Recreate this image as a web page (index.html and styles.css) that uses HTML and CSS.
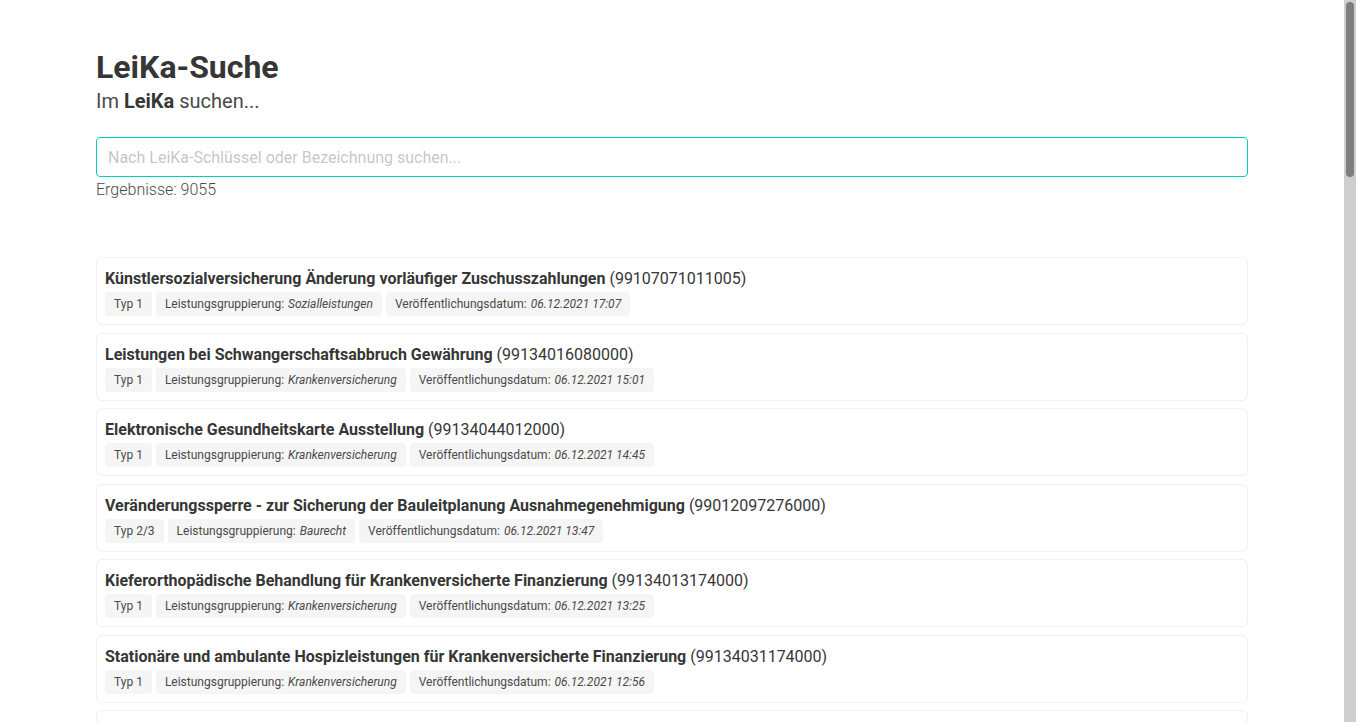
FILE: index.html
```html
<!DOCTYPE html>
<html lang="de">
<head>
<meta charset="utf-8">
<title>LeiKa-Suche</title>
<link rel="stylesheet" href="styles.css">
</head>
<body>
<section class="section">
  <div class="container">
    <h1 class="title">LeiKa-Suche</h1>
    <p class="subtitle">Im <strong>LeiKa</strong> suchen...</p>
    <input class="input" type="text" placeholder="Nach LeiKa-Schlüssel oder Bezeichnung suchen...">
    <p class="count">Ergebnisse: 9055</p>

    <div class="results">
      <div class="card"><div class="card-title"><strong>Künstlersozialversicherung Änderung vorläufiger Zuschusszahlungen</strong> (99107071011005)</div><div class="tags"><span class="tag">Typ 1</span><span class="tag">Leistungsgruppierung: <em>Sozialleistungen</em></span><span class="tag">Veröffentlichungsdatum: <em>06.12.2021 17:07</em></span></div></div>
      <div class="card"><div class="card-title"><strong>Leistungen bei Schwangerschaftsabbruch Gewährung</strong> (99134016080000)</div><div class="tags"><span class="tag">Typ 1</span><span class="tag">Leistungsgruppierung: <em>Krankenversicherung</em></span><span class="tag">Veröffentlichungsdatum: <em>06.12.2021 15:01</em></span></div></div>
      <div class="card"><div class="card-title"><strong>Elektronische Gesundheitskarte Ausstellung</strong> (99134044012000)</div><div class="tags"><span class="tag">Typ 1</span><span class="tag">Leistungsgruppierung: <em>Krankenversicherung</em></span><span class="tag">Veröffentlichungsdatum: <em>06.12.2021 14:45</em></span></div></div>
      <div class="card"><div class="card-title"><strong>Veränderungssperre - zur Sicherung der Bauleitplanung Ausnahmegenehmigung</strong> (99012097276000)</div><div class="tags"><span class="tag">Typ 2/3</span><span class="tag">Leistungsgruppierung: <em>Baurecht</em></span><span class="tag">Veröffentlichungsdatum: <em>06.12.2021 13:47</em></span></div></div>
      <div class="card"><div class="card-title"><strong>Kieferorthopädische Behandlung für Krankenversicherte Finanzierung</strong> (99134013174000)</div><div class="tags"><span class="tag">Typ 1</span><span class="tag">Leistungsgruppierung: <em>Krankenversicherung</em></span><span class="tag">Veröffentlichungsdatum: <em>06.12.2021 13:25</em></span></div></div>
      <div class="card"><div class="card-title"><strong>Stationäre und ambulante Hospizleistungen für Krankenversicherte Finanzierung</strong> (99134031174000)</div><div class="tags"><span class="tag">Typ 1</span><span class="tag">Leistungsgruppierung: <em>Krankenversicherung</em></span><span class="tag">Veröffentlichungsdatum: <em>06.12.2021 12:56</em></span></div></div>
      <div class="card"><div class="card-title"><strong>Häusliche Krankenpflege für Krankenversicherte Finanzierung</strong> (99134022174000)</div><div class="tags"><span class="tag">Typ 1</span><span class="tag">Leistungsgruppierung: <em>Krankenversicherung</em></span><span class="tag">Veröffentlichungsdatum: <em>06.12.2021 12:31</em></span></div></div>
      <div class="card"><div class="card-title"><strong>Haushaltshilfe für Krankenversicherte Gewährung</strong> (99134023080000)</div><div class="tags"><span class="tag">Typ 1</span><span class="tag">Leistungsgruppierung: <em>Krankenversicherung</em></span><span class="tag">Veröffentlichungsdatum: <em>06.12.2021 12:10</em></span></div></div>
      <div class="card"><div class="card-title"><strong>Krankengeld Gewährung</strong> (99134024080000)</div><div class="tags"><span class="tag">Typ 1</span><span class="tag">Leistungsgruppierung: <em>Krankenversicherung</em></span><span class="tag">Veröffentlichungsdatum: <em>06.12.2021 11:52</em></span></div></div>
      <div class="card"><div class="card-title"><strong>Mutterschaftsgeld für Krankenversicherte Gewährung</strong> (99134026080000)</div><div class="tags"><span class="tag">Typ 1</span><span class="tag">Leistungsgruppierung: <em>Krankenversicherung</em></span><span class="tag">Veröffentlichungsdatum: <em>06.12.2021 11:34</em></span></div></div>
      <div class="card"><div class="card-title"><strong>Baugenehmigung Erteilung</strong> (99012009261000)</div><div class="tags"><span class="tag">Typ 2/3</span><span class="tag">Leistungsgruppierung: <em>Baurecht</em></span><span class="tag">Veröffentlichungsdatum: <em>06.12.2021 11:12</em></span></div></div>
      <div class="card"><div class="card-title"><strong>Vorbescheid für Bauvorhaben Erteilung</strong> (99012098261000)</div><div class="tags"><span class="tag">Typ 2/3</span><span class="tag">Leistungsgruppierung: <em>Baurecht</em></span><span class="tag">Veröffentlichungsdatum: <em>06.12.2021 10:48</em></span></div></div>
      <div class="card"><div class="card-title"><strong>Abgeschlossenheitsbescheinigung Erteilung</strong> (99012001261000)</div><div class="tags"><span class="tag">Typ 2/3</span><span class="tag">Leistungsgruppierung: <em>Baurecht</em></span><span class="tag">Veröffentlichungsdatum: <em>06.12.2021 10:27</em></span></div></div>
      <div class="card"><div class="card-title"><strong>Hilfsmittel für Krankenversicherte Gewährung</strong> (99134025080000)</div><div class="tags"><span class="tag">Typ 1</span><span class="tag">Leistungsgruppierung: <em>Krankenversicherung</em></span><span class="tag">Veröffentlichungsdatum: <em>06.12.2021 10:05</em></span></div></div>
      <div class="card"><div class="card-title"><strong>Künstlersozialabgabe Festsetzung</strong> (99107069039000)</div><div class="tags"><span class="tag">Typ 1</span><span class="tag">Leistungsgruppierung: <em>Sozialleistungen</em></span><span class="tag">Veröffentlichungsdatum: <em>06.12.2021 09:44</em></span></div></div>
      <div class="card"><div class="card-title"><strong>Rehabilitationsleistungen für Krankenversicherte Gewährung</strong> (99134029080000)</div><div class="tags"><span class="tag">Typ 1</span><span class="tag">Leistungsgruppierung: <em>Krankenversicherung</em></span><span class="tag">Veröffentlichungsdatum: <em>06.12.2021 09:21</em></span></div></div>
      <div class="card"><div class="card-title"><strong>Fahrkosten für Krankenversicherte Erstattung</strong> (99134021064000)</div><div class="tags"><span class="tag">Typ 1</span><span class="tag">Leistungsgruppierung: <em>Krankenversicherung</em></span><span class="tag">Veröffentlichungsdatum: <em>06.12.2021 09:03</em></span></div></div>
      <div class="card"><div class="card-title"><strong>Zahnersatz für Krankenversicherte Finanzierung</strong> (99134036174000)</div><div class="tags"><span class="tag">Typ 1</span><span class="tag">Leistungsgruppierung: <em>Krankenversicherung</em></span><span class="tag">Veröffentlichungsdatum: <em>03.12.2021 16:42</em></span></div></div>
      <div class="card"><div class="card-title"><strong>Beseitigungsanordnung für bauliche Anlagen Erlass</strong> (99012005262000)</div><div class="tags"><span class="tag">Typ 2/3</span><span class="tag">Leistungsgruppierung: <em>Baurecht</em></span><span class="tag">Veröffentlichungsdatum: <em>03.12.2021 16:15</em></span></div></div>
      <div class="card"><div class="card-title"><strong>Nutzungsuntersagung für bauliche Anlagen Erlass</strong> (99012067262000)</div><div class="tags"><span class="tag">Typ 2/3</span><span class="tag">Leistungsgruppierung: <em>Baurecht</em></span><span class="tag">Veröffentlichungsdatum: <em>03.12.2021 15:58</em></span></div></div>
      <div class="card"><div class="card-title"><strong>Vorsorgeuntersuchungen für Krankenversicherte Finanzierung</strong> (99134034174000)</div><div class="tags"><span class="tag">Typ 1</span><span class="tag">Leistungsgruppierung: <em>Krankenversicherung</em></span><span class="tag">Veröffentlichungsdatum: <em>03.12.2021 15:36</em></span></div></div>
      <div class="card"><div class="card-title"><strong>Familienversicherung in der Krankenversicherung Durchführung</strong> (99134019007000)</div><div class="tags"><span class="tag">Typ 1</span><span class="tag">Leistungsgruppierung: <em>Krankenversicherung</em></span><span class="tag">Veröffentlichungsdatum: <em>03.12.2021 15:11</em></span></div></div>
      <div class="card"><div class="card-title"><strong>Künstlersozialversicherung Feststellung der Versicherungspflicht</strong> (99107071028000)</div><div class="tags"><span class="tag">Typ 1</span><span class="tag">Leistungsgruppierung: <em>Sozialleistungen</em></span><span class="tag">Veröffentlichungsdatum: <em>03.12.2021 14:49</em></span></div></div>
      <div class="card"><div class="card-title"><strong>Teilungsgenehmigung für Grundstücke Erteilung</strong> (99012089261000)</div><div class="tags"><span class="tag">Typ 2/3</span><span class="tag">Leistungsgruppierung: <em>Baurecht</em></span><span class="tag">Veröffentlichungsdatum: <em>03.12.2021 14:22</em></span></div></div>
      <div class="card"><div class="card-title"><strong>Heilmittel für Krankenversicherte Finanzierung</strong> (99134024174000)</div><div class="tags"><span class="tag">Typ 1</span><span class="tag">Leistungsgruppierung: <em>Krankenversicherung</em></span><span class="tag">Veröffentlichungsdatum: <em>03.12.2021 13:57</em></span></div></div>
      <div class="card"><div class="card-title"><strong>Zuzahlungsbefreiung in der Krankenversicherung Gewährung</strong> (99134038080000)</div><div class="tags"><span class="tag">Typ 1</span><span class="tag">Leistungsgruppierung: <em>Krankenversicherung</em></span><span class="tag">Veröffentlichungsdatum: <em>03.12.2021 13:30</em></span></div></div>
      <div class="card"><div class="card-title"><strong>Abbruch baulicher Anlagen Anzeige</strong> (99012002005000)</div><div class="tags"><span class="tag">Typ 2/3</span><span class="tag">Leistungsgruppierung: <em>Baurecht</em></span><span class="tag">Veröffentlichungsdatum: <em>03.12.2021 13:04</em></span></div></div>
      <div class="card"><div class="card-title"><strong>Künstlersozialversicherung Befreiung von der Versicherungspflicht</strong> (99107071003000)</div><div class="tags"><span class="tag">Typ 1</span><span class="tag">Leistungsgruppierung: <em>Sozialleistungen</em></span><span class="tag">Veröffentlichungsdatum: <em>03.12.2021 12:41</em></span></div></div>
      <div class="card"><div class="card-title"><strong>Künstliche Befruchtung für Krankenversicherte Finanzierung</strong> (99134014174000)</div><div class="tags"><span class="tag">Typ 1</span><span class="tag">Leistungsgruppierung: <em>Krankenversicherung</em></span><span class="tag">Veröffentlichungsdatum: <em>03.12.2021 12:18</em></span></div></div>
      <div class="card"><div class="card-title"><strong>Befreiung von Festsetzungen des Bebauungsplans Erteilung</strong> (99012004261000)</div><div class="tags"><span class="tag">Typ 2/3</span><span class="tag">Leistungsgruppierung: <em>Baurecht</em></span><span class="tag">Veröffentlichungsdatum: <em>03.12.2021 11:55</em></span></div></div>
      <div class="card"><div class="card-title"><strong>Krankenhausbehandlung für Krankenversicherte Finanzierung</strong> (99134018174000)</div><div class="tags"><span class="tag">Typ 1</span><span class="tag">Leistungsgruppierung: <em>Krankenversicherung</em></span><span class="tag">Veröffentlichungsdatum: <em>03.12.2021 11:32</em></span></div></div>
      <div class="card"><div class="card-title"><strong>Kinderkrankengeld Gewährung</strong> (99134015080000)</div><div class="tags"><span class="tag">Typ 1</span><span class="tag">Leistungsgruppierung: <em>Krankenversicherung</em></span><span class="tag">Veröffentlichungsdatum: <em>03.12.2021 11:08</em></span></div></div>
      <div class="card"><div class="card-title"><strong>Werbeanlagen Genehmigung</strong> (99012100261000)</div><div class="tags"><span class="tag">Typ 2/3</span><span class="tag">Leistungsgruppierung: <em>Baurecht</em></span><span class="tag">Veröffentlichungsdatum: <em>03.12.2021 10:46</em></span></div></div>
      <div class="card"><div class="card-title"><strong>Künstlersozialversicherung Meldung des voraussichtlichen Arbeitseinkommens</strong> (99107071057000)</div><div class="tags"><span class="tag">Typ 1</span><span class="tag">Leistungsgruppierung: <em>Sozialleistungen</em></span><span class="tag">Veröffentlichungsdatum: <em>03.12.2021 10:20</em></span></div></div>
    </div>
  </div>
</section>
<div class="scrollbar" aria-hidden="true"><div class="scrollbar-thumb"></div></div>
</body>
</html>
```

FILE: styles.css
```css
html, body {
  margin: 0;
  padding: 0;
  background: #ffffff;
}

body {
  font-family: Roboto, "Liberation Sans", Arial, sans-serif;
  color: #4a4a4a;
  font-size: 16px;
  line-height: 1.5;
}

/* visual replica of the browser's vertical scrollbar, overlaid at the right edge */
.scrollbar {
  position: fixed;
  top: 0;
  right: 0;
  bottom: 0;
  width: 12px;
  background: #cecece;
}

.scrollbar-thumb {
  position: absolute;
  top: 2px;
  left: 2px;
  width: 8px;
  height: 175px;
  border-radius: 4px;
  background: #7e7e7e;
}

.section {
  padding: 49px 0 96px 0;
}

.container {
  width: 1152px;
  margin-left: 96px;
}

.title {
  margin: 0;
  font-size: 32px;
  line-height: 36px;
  font-weight: 700;
  color: #363636;
}

.subtitle {
  margin: 4px 0 0 0;
  font-size: 20px;
  line-height: 25px;
  font-weight: 400;
  color: #4a4a4a;
}

.subtitle strong {
  font-weight: 700;
  color: #363636;
}

.input {
  display: block;
  box-sizing: border-box;
  width: 100%;
  height: 40px;
  margin: 23px 0 0 0;
  padding: 0 11px;
  font-family: inherit;
  font-size: 16px;
  color: #363636;
  background: #ffffff;
  border: 1px solid #00d1b2;
  border-radius: 4px;
  outline: none;
}

.input::placeholder {
  color: rgba(54, 54, 54, 0.3);
}

.count {
  margin: 1px 0 0 0;
  font-weight: 300;
  line-height: 24px;
  color: #4a4a4a;
}

.results {
  margin-top: 55px;
}

.card {
  box-sizing: border-box;
  padding: 8px;
  margin-bottom: 7.5px;
  border: 1px solid #f1f1f1;
  border-radius: 6px;
  background: #ffffff;
}

.card-title {
  padding-top: 1px;
  line-height: 24px;
  color: #363636;
}

.card-title strong {
  font-weight: 700;
  color: #363636;
}

.tags {
  display: flex;
  flex-wrap: wrap;
  gap: 4px;
  margin-top: 1px;
}

.tag {
  display: inline-flex;
  align-items: center;
  height: 24px;
  padding: 0 9px;
  font-size: 12px;
  line-height: 1.5;
  white-space: nowrap;
  color: #4a4a4a;
  background: #f5f5f5;
  border-radius: 4px;
}

.tag em {
  font-style: italic;
  margin-left: 4px;
}
```
